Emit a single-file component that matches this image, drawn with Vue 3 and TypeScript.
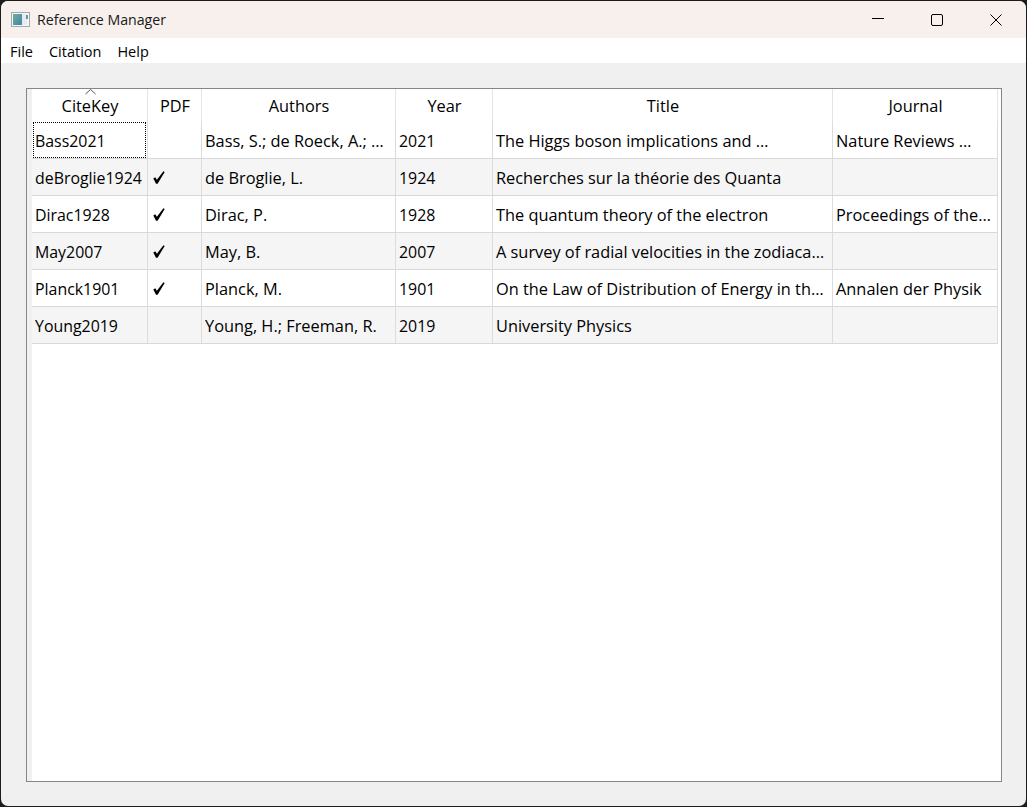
<script setup lang="ts">
interface Row { key: string; pdf: boolean; authors: string; year: string; title: string; journal: string }
const headers: string[] = ['CiteKey', 'PDF', 'Authors', 'Year', 'Title', 'Journal']
const rows: Row[] = [
  { key: 'Bass2021', pdf: false, authors: 'Bass, S.; de Roeck, A.; …', year: '2021', title: 'The Higgs boson implications and …', journal: 'Nature Reviews …' },
  { key: 'deBroglie1924', pdf: true, authors: 'de Broglie, L.', year: '1924', title: 'Recherches sur la théorie des Quanta', journal: '' },
  { key: 'Dirac1928', pdf: true, authors: 'Dirac, P.', year: '1928', title: 'The quantum theory of the electron', journal: 'Proceedings of the…' },
  { key: 'May2007', pdf: true, authors: 'May, B.', year: '2007', title: 'A survey of radial velocities in the zodiaca…', journal: '' },
  { key: 'Planck1901', pdf: true, authors: 'Planck, M.', year: '1901', title: 'On the Law of Distribution of Energy in th…', journal: 'Annalen der Physik' },
  { key: 'Young2019', pdf: false, authors: 'Young, H.; Freeman, R.', year: '2019', title: 'University Physics', journal: '' },
]
</script>

<template>
  <div class="window">
    <header class="titlebar">
      <div class="title-left">
        <svg class="app-icon" width="19" height="15" viewBox="0 0 19 15">
          <rect x="0.5" y="0.5" width="18" height="14" fill="#f6f6f6" stroke="#a3a8ac" />
          <defs>
            <linearGradient id="ic" x1="0" y1="0" x2="1" y2="1">
              <stop offset="0" stop-color="#6fae9a" />
              <stop offset="1" stop-color="#3f86a8" />
            </linearGradient>
          </defs>
          <rect x="2" y="2" width="9" height="11" fill="url(#ic)" />
          <rect x="11" y="2" width="5" height="11" fill="#e6ecee" />
          <rect x="15" y="3" width="2" height="4" fill="#5d9aa5" />
        </svg>
        <span class="title-text">Reference Manager</span>
      </div>
      <div class="controls">
        <svg width="12" height="12" viewBox="0 0 12 12"><path d="M0 4.5H12" stroke="#000" stroke-width="1" /></svg>
        <svg width="12" height="12" viewBox="0 0 12 12"><rect x="0.5" y="0.5" width="11" height="11" rx="1.5" fill="none" stroke="#000" stroke-width="1" /></svg>
        <svg width="12" height="12" viewBox="0 0 12 12"><path d="M0.5 0.5L11.5 11.5M11.5 0.5L0.5 11.5" stroke="#000" stroke-width="1" /></svg>
      </div>
    </header>
    <nav class="menubar">
      <span>File</span>
      <span>Citation</span>
      <span>Help</span>
    </nav>
    <main class="content">
      <div class="frame">
        <div class="gutter"></div>
        <div class="table">
          <div class="head">
            <div v-for="(h, i) in headers" :key="h" class="hcell" :class="'c' + i">
              <svg v-if="i === 0" class="sort" width="11" height="6" viewBox="0 0 11 6"><path d="M0.5 5L5.5 0.5L10.5 5" fill="none" stroke="#555" stroke-width="1" /></svg>
              {{ h }}
            </div>
          </div>
          <div v-for="(r, idx) in rows" :key="r.key" class="row" :class="{ alt: idx % 2 === 1 }">
            <div class="cell c0 num"><span class="cur" v-if="idx === 0"></span>{{ r.key }}</div>
            <div class="cell c1">
              <svg v-if="r.pdf" class="check" width="12" height="13" viewBox="0 0 12 13"><path d="M0.3 7.6L2.2 6.2L3.9 8.7L10.4 0.3L11.7 1L4.6 12.7L3 12.7Z" fill="#000" /></svg>
            </div>
            <div class="cell c2">{{ r.authors }}</div>
            <div class="cell c3 num">{{ r.year }}</div>
            <div class="cell c4">{{ r.title }}</div>
            <div class="cell c5">{{ r.journal }}</div>
          </div>
        </div>
      </div>
    </main>
  </div>
</template>

<style>
html, body { margin: 0; background: #1c1c1c; }
</style>

<style scoped>
.window {
  width: 1025px;
  height: 805px;
  margin: 1px;
  border-radius: 7px;
  overflow: hidden;
  display: flex;
  flex-direction: column;
  background: #f0f0f0;
  font-family: "Open Sans", "Noto Sans", sans-serif;
  font-size: 16.35px;
  color: #000;
}
.titlebar {
  height: 37px;
  flex: none;
  background: #f7f0ed;
  display: flex;
  align-items: center;
  justify-content: space-between;
}
.title-left { display: flex; align-items: center; gap: 7px; padding-left: 10px; }
.title-text { font-size: 14.2px; color: #1a1a1a; }
.controls { display: flex; gap: 47px; padding-right: 24px; }
.menubar {
  height: 25px;
  flex: none;
  background: #fff;
  display: flex;
  align-items: center;
  gap: 16px;
  padding: 2px 0 0 9px;
  box-sizing: border-box;
  font-size: 14.5px;
}
.content { flex: 1; padding: 25px 24px 24px 25px; display: flex; min-height: 0; }
.frame {
  flex: 1;
  border: 1px solid #85858f;
  background: #fff;
  display: flex;
}
.gutter { width: 5px; flex: none; background: #f0f0f0; }
.table { flex: 1; }
.head { display: flex; height: 33px; width: 966px; }
.row { display: flex; width: 966px; height: 37px; box-sizing: border-box; border-bottom: 1px solid #d8d8d8; }
.row.alt { background: #f5f5f5; }
.hcell, .cell { box-sizing: border-box; border-right: 1px solid #dcdcdc; flex: none; white-space: nowrap; overflow: hidden; }
.hcell { position: relative; text-align: center; line-height: 34px; padding-left: 1px; }
.cell { display: flex; align-items: center; padding: 2px 0 0 3px; position: relative; }
.num { font-size: 15.9px; }
.head .hcell { border-right-color: #e4e4e4; }
.c0 { width: 116px; }
.c1 { width: 54px; }
.c2 { width: 194px; }
.c3 { width: 97px; }
.c4 { width: 340px; }
.c5 { width: 165px; }
.sort { position: absolute; top: 0; left: 53px; }
.cur {
  position: absolute;
  left: 1px;
  top: 0;
  right: 1px;
  bottom: 0;
  border: 1px dotted #000;
}
.check { margin-left: 2px; margin-top: -2px; }
</style>
